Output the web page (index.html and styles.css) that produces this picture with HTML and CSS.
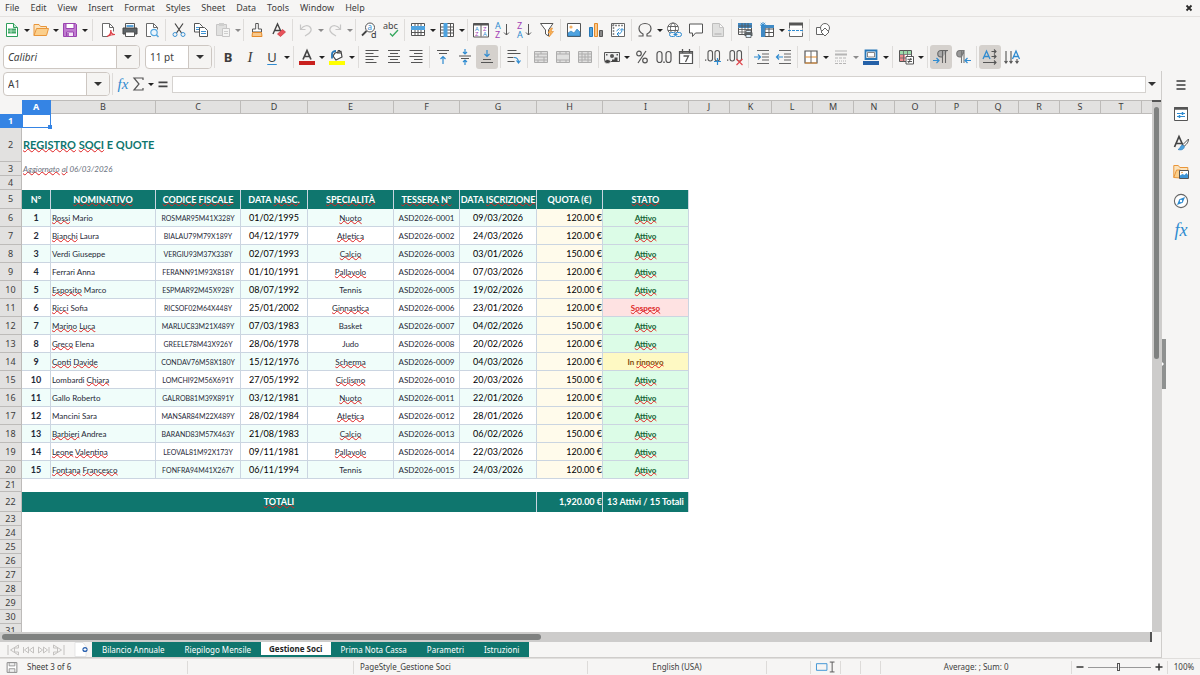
FILE: index.html
```html
<!DOCTYPE html>
<html lang="en">
<head>
<meta charset="utf-8">
<title>Gestione Soci</title>
<link rel="stylesheet" href="styles.css">
</head>
<body>
<header class="menubar">
  <nav class="menus">
    <button>File</button><button>Edit</button><button>View</button><button>Insert</button><button>Format</button><button>Styles</button><button>Sheet</button><button>Data</button><button>Tools</button><button>Window</button><button>Help</button>
  </nav>
  <button class="close" aria-label="Close document"><svg viewBox="0 0 8 8"><path d="M1.500 1.500l5 5M6.500 1.500l-5 5" stroke="#2b2b2b" stroke-width="1.800"/></svg></button>
</header>

<div class="toolbar standard">
  <button class="tool" aria-label="New"><svg viewBox="0 0 16 16"><path d="M2.500 1.500h7l4 4v9h-11z" fill="#fff" stroke="#2f9e5b"/><path d="M9.500 1.500v4h4" fill="#c9ecd5" stroke="#2f9e5b"/><path d="M4 6.500h8v5H4z" fill="#3fa866"/><path d="M4 9h8M7 6.500v5" stroke="#d8f2e0" stroke-width=".7"/></svg></button><button class="caret" aria-label="New options"></button>
  <button class="tool" aria-label="Open"><svg viewBox="0 0 16 16"><path d="M1 13.500V2.500h5l1.500 2h6v2" fill="#fbe3bd" stroke="#e9963a"/><path d="M1 13.500L3.500 6.500h12L13.500 13.500z" fill="#fbcf8c" stroke="#e9963a"/></svg></button><button class="caret" aria-label="Open options"></button>
  <button class="tool" aria-label="Save"><svg viewBox="0 0 16 16"><path d="M1.500 1.500h12l1 1v12h-13z" fill="#c07bd0" stroke="#9a44b0"/><path d="M4 1.500h8v5H4z" fill="#fff" stroke="#9a44b0"/><path d="M4.500 10h7v4.500h-7z" fill="#f5e6f8" stroke="#9a44b0"/><path d="M6 11v3" stroke="#9a44b0" stroke-width="1.500"/></svg></button><button class="caret" aria-label="Save options"></button>
  <i class="sep wide"></i>
  <button class="tool" aria-label="Export as PDF"><svg viewBox="0 0 16 16"><path d="M8 14.500H2.500v-13h7l4 4v4" fill="#fff" stroke="#6a6a6a"/><path d="M9.500 1.500v4h4" fill="none" stroke="#6a6a6a"/><path d="M7 14.500c3-1 4-4 3.800-6.500 0 2.500 1.500 4.500 4.200 4.500-3 0-5 .5-8 2z" fill="none" stroke="#dc4048" stroke-width="1.200"/></svg></button>
  <button class="tool" aria-label="Print"><svg viewBox="0 0 16 16"><path d="M1 6h14v6H1z" fill="#5d6468" stroke="#444"/><path d="M3.500 1.500h9V6h-9z" fill="#fff" stroke="#555"/><path d="M3.500 10h9v4.500h-9z" fill="#fff" stroke="#555"/><path d="M4.500 4h7" stroke="#2f8bd0" stroke-width="1.600"/></svg></button>
  <button class="tool" aria-label="Print preview"><svg viewBox="0 0 16 16"><path d="M7 14.500H2.500v-13h7l4 4v2" fill="#fff" stroke="#6a6a6a"/><path d="M9.500 1.500v4h4" fill="none" stroke="#6a6a6a"/><circle cx="10" cy="10.500" r="3.200" fill="#eaf5fd" stroke="#59a8df" stroke-width="1.200"/><path d="M12.300 12.800l2.200 2.200" stroke="#59a8df" stroke-width="1.600"/></svg></button>
  <i class="sep"></i>
  <button class="tool" aria-label="Cut"><svg viewBox="0 0 16 16"><path d="M4 1.500l6.500 9.500M12 1.500L5.500 11" stroke="#444" stroke-width="1.200"/><circle cx="4" cy="12.500" r="2" fill="none" stroke="#3d93d4"/><circle cx="12" cy="12.500" r="2" fill="none" stroke="#3d93d4"/></svg></button>
  <button class="tool" aria-label="Copy"><svg viewBox="0 0 16 16"><path d="M1.500 1.500h5l3 3V10h-8z" fill="#fff" stroke="#555"/><path d="M3 5.500h4M3 7.500h4" stroke="#3d93d4"/><path d="M6.500 5.500h5l3 3v6h-8z" fill="#fff" stroke="#555"/><path d="M8 9.500h5M8 11.500h5" stroke="#3d93d4"/></svg></button>
  <button class="tool dim" aria-label="Paste"><svg viewBox="0 0 16 16"><path d="M1.500 2.500h10v11h-10z" fill="#ccc" stroke="#999"/><path d="M4 1h5v3H4z" fill="#aaa"/><path d="M7.500 6.500h7v8h-7z" fill="#f5f5f5" stroke="#999"/><path d="M9 9.500h4M9 11.500h4" stroke="#aaa"/></svg></button><button class="caret dim" aria-label="Paste options"></button>
  <i class="sep"></i>
  <button class="tool" aria-label="Clone formatting"><svg viewBox="0 0 16 16"><path d="M6.700 1.500h2.600V7h3.200v3h-9V7h3.200z" fill="#fff" stroke="#555"/><path d="M3.500 10.500h9l.5 4h-10z" fill="#f9c98d" stroke="#e58b2a"/></svg></button>
  <button class="tool" aria-label="Clear formatting"><svg viewBox="0 0 16 16"><path d="M2 12L6.500 2 10 9.500M4 8.500h5" fill="none" stroke="#444" stroke-width="1.400"/><path d="M6.500 12l5-4.500 3 2.500-5 4.500z" fill="#e8525a" stroke="#c9303a" stroke-width=".7"/></svg></button>
  <i class="sep"></i>
  <button class="tool dim" aria-label="Undo"><svg viewBox="0 0 16 16"><path d="M2.500 2.500v5h5M3 7c3-4 7-4 9-2 2.500 2.700 1 6-5 9" fill="none" stroke="#999" stroke-width="1.200"/></svg></button><button class="caret dim" aria-label="Undo list"></button>
  <button class="tool dim" aria-label="Redo"><svg viewBox="0 0 16 16"><path d="M13.500 2.500v5h-5M13 7c-3-4-7-4-9-2-2.500 2.700-1 6 5 9" fill="none" stroke="#999" stroke-width="1.200"/></svg></button><button class="caret dim" aria-label="Redo list"></button>
  <i class="sep"></i>
  <button class="tool" aria-label="Find and replace"><svg viewBox="0 0 16 16"><circle cx="9" cy="5.500" r="4.500" fill="#fff" stroke="#555"/><path d="M5.500 9L1 13.500" stroke="#444" stroke-width="1.800"/><text x="6.500" y="8" font-size="8" fill="#2f8bd0">a</text><text x="10" y="16" font-size="9" fill="#333">d</text></svg></button>
  <button class="tool" aria-label="Spelling"><svg viewBox="0 0 16 16"><text x="0" y="7" font-size="9" fill="#444">abc</text><path d="M7 11.500l2.500 2.500L15 8" fill="none" stroke="#36a85f" stroke-width="1.300"/></svg></button>
  <i class="sep"></i>
  <button class="tool" aria-label="Row"><svg viewBox="0 0 16 16"><path d="M1.500 1.500h13v12h-13z" fill="#fff" stroke="#555"/><path d="M5 1.500v12M8 1.500v12M11 1.500v12M1.500 10.500h13" stroke="#555"/><path d="M1 4h14v4H1z" fill="#4ea3e0"/></svg></button><button class="caret" aria-label="Row options"></button>
  <button class="tool" aria-label="Column"><svg viewBox="0 0 16 16"><path d="M1.500 1.500h13v13h-13z" fill="#fff" stroke="#555"/><path d="M1.500 5h13M1.500 8h13M1.500 11h13M11.500 1.500v13" stroke="#555"/><path d="M4.500 1h4v14h-4z" fill="#4ea3e0"/></svg></button><button class="caret" aria-label="Column options"></button>
  <i class="sep"></i>
  <button class="tool" aria-label="Sort"><svg viewBox="0 0 16 16"><path d="M.5 1.500h15v13.500H.5z" fill="#fff" stroke="#555"/><path d="M.5 2.500h15" stroke="#555" stroke-width="2"/><path d="M8 2v12.500" stroke="#555"/><text x="2" y="8.500" font-size="6" fill="#2f8bd0">A</text><text x="2" y="14" font-size="6" fill="#a23fb5">Z</text><text x="10" y="8.500" font-size="6" fill="#a23fb5">Z</text><text x="10" y="14" font-size="6" fill="#2f8bd0">A</text></svg></button>
  <button class="tool" aria-label="Sort ascending"><svg viewBox="0 0 16 16"><text x="0" y="7" font-size="9" fill="#2f8bd0">A</text><text x="0" y="16" font-size="9" fill="#a23fb5">Z</text><path d="M11.500 2v11M9 10.500l2.500 2.500 2.500-2.500" fill="none" stroke="#555"/></svg></button>
  <button class="tool" aria-label="Sort descending"><svg viewBox="0 0 16 16"><text x="0" y="7" font-size="9" fill="#a23fb5">Z</text><text x="0" y="16" font-size="9" fill="#2f8bd0">A</text><path d="M11.500 2v11M9 10.500l2.500 2.500 2.500-2.500" fill="none" stroke="#555"/></svg></button>
  <button class="tool" aria-label="AutoFilter"><svg viewBox="0 0 16 16"><path d="M1.500 1.500h12.500L9.500 8v6l-3-2V8z" fill="#fff" stroke="#555"/><path d="M12 6l-3 5h2.500L10 15l4.500-5.500H12L13.500 6z" fill="#f9b35b" stroke="#e58b2a" stroke-width=".6"/></svg></button>
  <i class="sep"></i>
  <button class="tool" aria-label="Insert image"><svg viewBox="0 0 16 16"><path d="M1.500 1.500h13v13h-13z" fill="#fff" stroke="#555"/><circle cx="5" cy="5" r="1.600" fill="#f6b165"/><path d="M2 14v-3l3-2 3 2 3-4 3 3v4z" fill="#4ea3e0" stroke="#2878b8" stroke-width=".6"/></svg></button>
  <button class="tool" aria-label="Insert chart"><svg viewBox="0 0 16 16"><path d="M1.500 5.500h3v9h-3z" fill="#4ea3e0" stroke="#2878b8"/><path d="M6.500 1.500h3v13h-3z" fill="#fbc88a" stroke="#e58b2a"/><path d="M11.500 8.500h3v6h-3z" fill="#888" stroke="#555"/></svg></button>
  <button class="tool" aria-label="Insert pivot table"><svg viewBox="0 0 16 16"><path d="M1.500 1.500h13v13h-13z" fill="#fff" stroke="#666"/><path d="M2 3.500h12M3.500 2v12" stroke="#888" stroke-width="1.500" stroke-dasharray="2 1"/><path d="M7 12c4 0 5-2 5-5M10 8.500L12 6.500l2 2M9 10L7 12l2 2M6.500 9l3-2.500" fill="none" stroke="#2f8bd0"/></svg></button>
  <i class="sep"></i>
  <button class="tool" aria-label="Special character"><svg viewBox="0 0 16 16"><path d="M1.500 14h4.500v-2C3 10.500 2 8.500 2 6.500 2 3.500 4.500 1.500 8 1.500s6 2 6 5c0 2-1 4-4 5.500v2h4.500" fill="none" stroke="#555" stroke-width="1.200"/></svg></button><button class="caret" aria-label="Special character list"></button>
  <button class="tool" aria-label="Hyperlink"><svg viewBox="0 0 16 16"><circle cx="7" cy="6.500" r="5.500" fill="#fff" stroke="#666"/><ellipse cx="7" cy="6.500" rx="2.500" ry="5.500" fill="none" stroke="#666"/><path d="M2 4.500h10M2 8.500h10" stroke="#666"/><rect x="3.500" y="10.500" width="6" height="4" rx="2" fill="#f6f5f4" stroke="#2f8bd0"/><rect x="9.500" y="10.500" width="6" height="4" rx="2" fill="#f6f5f4" stroke="#2f8bd0"/><path d="M7.500 12.500h4" stroke="#2f8bd0"/></svg></button>
  <button class="tool" aria-label="Insert comment"><svg viewBox="0 0 16 16"><path d="M1.500 2h13v9H7.500l-3 3.500V11h-3z" fill="#fff" stroke="#555"/></svg></button>
  <button class="tool dim" aria-label="Headers and footers"><svg viewBox="0 0 16 16"><path d="M2.500 1.500h7l4 4v9h-11z" fill="#ccc" stroke="#888"/><path d="M9.500 1.500v4h4z" fill="#fff" stroke="#999"/><path d="M4.500 11h7v2h-7z" fill="#999"/></svg></button>
  <i class="sep"></i>
  <button class="tool" aria-label="Define print area"><svg viewBox="0 0 16 16"><path d="M1.500 1.500h13v11h-13z" fill="#fff" stroke="#555"/><path d="M1 1h14v5H1z" fill="#4089c4"/><path d="M5 1v11M8 1v11M11 1v11M1 4h14M1 7.500h14M1 10h14" stroke="#555" stroke-width=".8"/><path d="M7.500 10.500h8v3.500h-8z" fill="#5d6468"/><path d="M9 8.500h5v2H9zM9 12.500h5v3H9z" fill="#dceffc" stroke="#444" stroke-width=".7"/></svg></button>
  <button class="tool" aria-label="Freeze rows and columns"><svg viewBox="0 0 16 16"><path d="M2.500 3.500h12v11h-12z" fill="#fff" stroke="#555"/><path d="M6 3v11M10 3v11M2 7h12M2 10.500h12" stroke="#555"/><path d="M2 3h13v3H2zM2 3h4v12H2z" fill="#4089c4"/><path d="M4 0v6M1 3h6M1.800 .8l4.400 4.400M6.200 .8L1.800 5.200" stroke="#2f8bd0" stroke-width=".9"/></svg></button><button class="caret" aria-label="Freeze options"></button>
  <button class="tool" aria-label="Split window"><svg viewBox="0 0 16 16"><path d="M1.500 1.500h13v13h-13z" fill="#fff" stroke="#666"/><path d="M1 2h14" stroke="#555" stroke-width="3"/><path d="M1 7h14M1 10h14" stroke="#f6f5f4"/><path d="M0 8.500h16" stroke="#2f8bd0" stroke-width="1.200" stroke-dasharray="3 1"/></svg></button>
  <i class="sep"></i>
  <button class="tool" aria-label="Show draw functions"><svg viewBox="0 0 16 16"><path d="M1.500 5.500h7v7h-7z" fill="#fff" stroke="#666"/><circle cx="10" cy="6" r="4.500" fill="#fff" stroke="#666"/><path d="M10 6l4 4-4 4-4-4z" fill="#fff" stroke="#666"/></svg></button>
</div>

<div class="toolbar formatting">
  <label class="combo font-combo"><input value="Calibri" aria-label="Font name"><span class="drop"></span></label>
  <label class="combo size-combo"><input value="11 pt" aria-label="Font size"><span class="drop"></span></label>
  <i class="sep"></i>
  <button class="tool glyph bold">B</button>
  <button class="tool glyph ital">I</button>
  <button class="tool glyph under">U</button><button class="caret" aria-label="Underline styles"></button>
  <i class="sep"></i>
  <button class="tool" aria-label="Font color"><svg viewBox="0 0 16 16"><path d="M4 10.500L8 1.500l4 9M5.500 7.500h5" fill="none" stroke="#444" stroke-width="1.700"/><path d="M0 12h16v4H0z" fill="#c9211e"/></svg></button><button class="caret" aria-label="Font colors"></button>
  <button class="tool" aria-label="Highlighting color"><svg viewBox="0 0 16 16"><path d="M6 4l6-1.500 1 5.500-6 3-3-4z" fill="#fff" stroke="#444" stroke-width="1.200"/><path d="M9 5V1.500h2V5" fill="none" stroke="#444"/><path d="M3 9.500V5c0-2 2-3 4-3" fill="none" stroke="#2878b8" stroke-width="1.800"/><path d="M0 12h16v4H0z" fill="#ffff00"/></svg></button><button class="caret" aria-label="Highlighting colors"></button>
  <i class="sep"></i>
  <button class="tool" aria-label="Align left"><svg viewBox="0 0 16 16"><path d="M1.500 1.500h13M1.500 4.500h8M1.500 7.500h13M1.500 10.500h8M1.500 13.500h11" stroke="#555" stroke-width="1.100"/></svg></button>
  <button class="tool" aria-label="Center"><svg viewBox="0 0 16 16"><path d="M2 1.500h12M4 4.500h8M2 7.500h12M4 10.500h8M2 13.500h12" stroke="#555" stroke-width="1.100"/></svg></button>
  <button class="tool" aria-label="Align right"><svg viewBox="0 0 16 16"><path d="M1.500 1.500h13M6 4.500h8.500M1.500 7.500h13M6 10.500h8.500M3 13.500h11.500" stroke="#555" stroke-width="1.100"/></svg></button>
  <i class="sep"></i>
  <button class="tool" aria-label="Align top"><svg viewBox="0 0 16 16"><path d="M2 1.500h12M4 4.500h8" stroke="#555" stroke-width="1.200"/><path d="M8 15V7.500M5.500 10L8 7.500l2.500 2.500" fill="none" stroke="#2f8bd0" stroke-width="1.200"/></svg></button>
  <button class="tool" aria-label="Center vertically"><svg viewBox="0 0 16 16"><path d="M2 7h12M4 9.500h8" stroke="#555" stroke-width="1.200"/><path d="M8 0v5M6 3l2 2 2-2M8 16v-5M6 13l2-2 2 2" fill="none" stroke="#2f8bd0" stroke-width="1.200"/></svg></button>
  <button class="tool active" aria-label="Align bottom"><svg viewBox="0 0 16 16"><path d="M4 10.500h8M2 13.500h12" stroke="#555" stroke-width="1.200"/><path d="M8 1v6.500M5.500 5L8 7.500 10.500 5" fill="none" stroke="#2f8bd0" stroke-width="1.200"/></svg></button>
  <i class="sep"></i>
  <button class="tool" aria-label="Wrap text"><svg viewBox="0 0 16 16"><path d="M1.500 1.500h9M1.500 4.500h13M1.500 8.500h6M1.500 12.500h7" stroke="#555" stroke-width="1.200"/><path d="M8 8.500c3 0 4.500 1 4.500 5M10.500 11.500l2 2.500 2-2.500" fill="none" stroke="#2f8bd0" stroke-width="1.200"/></svg></button>
  <i class="sep"></i>
  <button class="tool dim" aria-label="Merge and center cells"><svg viewBox="0 0 16 16"><path d="M1.500 2.500h13v11h-13z" fill="#ccc" stroke="#666"/><path d="M1.500 5h13M1.500 8h13M1.500 11h13M8 2.500V5M5 11v2.500M11 11v2.500M5 5v3M11 8v3" stroke="#666"/></svg></button>
  <button class="tool dim" aria-label="Merge cells"><svg viewBox="0 0 16 16"><path d="M1.500 2.500h13v11h-13z" fill="#ccc" stroke="#666"/><path d="M1.500 5h13M1.500 11h13M5 2.500V5M11 2.500V5M5 11v2.500M11 11v2.500" stroke="#666"/></svg></button>
  <button class="tool dim" aria-label="Split cells"><svg viewBox="0 0 16 16"><path d="M1.500 2.500h13v11h-13z" fill="#ccc" stroke="#666"/><path d="M1.500 5h13M1.500 8h13M1.500 11h13M5 2.500v11M8 5v6M11 2.500v11" stroke="#666"/></svg></button>
  <i class="sep"></i>
  <button class="tool" aria-label="Format as currency"><svg viewBox="0 0 16 16"><path d="M.5 3.500h15v9H.5z" fill="#eee" stroke="#555"/><circle cx="8" cy="7" r="2" fill="#555"/><path d="M2 5h1.500v1.500H2zM12.500 5H14v1.500h-1.500z" fill="#555"/><path d="M8 10.500h2.500V8.500h3V13H8z" fill="#444"/><ellipse cx="3.500" cy="12.500" rx="3" ry="2" fill="#444" stroke="#f6f5f4" stroke-width=".6"/></svg></button><button class="caret" aria-label="Currency list"></button>
  <button class="tool" aria-label="Format as percent"><svg viewBox="0 0 16 16"><circle cx="5" cy="4.500" r="2.300" fill="none" stroke="#555" stroke-width="1.200"/><circle cx="11" cy="11.500" r="2.300" fill="none" stroke="#555" stroke-width="1.200"/><path d="M12 2L4 14" stroke="#555" stroke-width="1.200"/></svg></button>
  <button class="tool" aria-label="Format as number"><svg viewBox="0 0 16 16"><rect x="1" y="2.500" width="5" height="11" rx="2.500" fill="none" stroke="#555" stroke-width="1.200"/><rect x="10" y="2.500" width="5" height="11" rx="2.500" fill="none" stroke="#555" stroke-width="1.200"/><path d="M7.300 12.500h1.400v1.400H7.300z" fill="#555"/></svg></button>
  <button class="tool" aria-label="Format as date"><svg viewBox="0 0 16 16"><path d="M1.500 2.500h13v12h-13z" fill="#fff" stroke="#555" stroke-width="1.200"/><path d="M1.500 4h13" stroke="#555" stroke-width="1.500"/><path d="M4.500 0v4M11.500 0v4" stroke="#555" stroke-width="1.300"/><path d="M5.500 7h5l-3 6" fill="none" stroke="#555" stroke-width="1.300"/></svg></button>
  <i class="sep"></i>
  <button class="tool" aria-label="Add decimal place"><svg viewBox="0 0 16 16"><path d="M0 10.500h1.300v1.300H0z" fill="#555"/><rect x="3" y="1.500" width="4.500" height="10.500" rx="2.200" fill="none" stroke="#555" stroke-width="1.100"/><rect x="10" y="1.500" width="4.500" height="10.500" rx="2.200" fill="none" stroke="#555" stroke-width="1.100"/><path d="M12.500 9v7M9 12.500h7" stroke="#2f8bd0" stroke-width="1.200"/></svg></button>
  <button class="tool" aria-label="Delete decimal place"><svg viewBox="0 0 16 16"><path d="M0 10.500h1.300v1.300H0z" fill="#555"/><rect x="3" y="1.500" width="4.500" height="10.500" rx="2.200" fill="none" stroke="#555" stroke-width="1.100"/><rect x="10" y="1.500" width="4.500" height="10.500" rx="2.200" fill="none" stroke="#555" stroke-width="1.100"/><path d="M9.500 10l6 6M15.500 10l-6 6" stroke="#e0484f" stroke-width="1.200"/></svg></button>
  <i class="sep"></i>
  <button class="tool" aria-label="Increase indent"><svg viewBox="0 0 16 16"><path d="M3 1.500h12M8 5h7M8 8h7M8 11h7M3 14.500h12" stroke="#666" stroke-width="1.100"/><path d="M0 8h6.500M4 5.500L6.500 8 4 10.500" fill="none" stroke="#2f8bd0" stroke-width="1.200"/></svg></button>
  <button class="tool" aria-label="Decrease indent"><svg viewBox="0 0 16 16"><path d="M3 1.500h12M8 5h7M8 8h7M8 11h7M3 14.500h12" stroke="#666" stroke-width="1.100"/><path d="M7 8H.8M3 5.500L.5 8 3 10.500" fill="none" stroke="#2f8bd0" stroke-width="1.200"/></svg></button>
  <i class="sep"></i>
  <button class="tool" aria-label="Borders"><svg viewBox="0 0 16 16"><path d="M2 2h12v12H2z" fill="#fff" stroke="#555" stroke-width="1.200"/><path d="M2 8h12M2 14h12" stroke="#e58b2a"/><path d="M8 2v12" stroke="#666"/></svg></button><button class="caret" aria-label="Border list"></button>
  <button class="tool dim" aria-label="Border style"><svg viewBox="0 0 16 16"><path d="M2 2h12" stroke="#777"/><path d="M2 5.500h12" stroke="#777" stroke-width="2"/><path d="M2 9h12M2 14.500h12" stroke="#777" stroke-dasharray="3 1"/><path d="M2 12h12" stroke="#777" stroke-dasharray="1 1"/></svg></button><button class="caret dim" aria-label="Border styles"></button>
  <button class="tool" aria-label="Border color"><svg viewBox="0 0 16 16"><path d="M2.500 1.500h11v8.500h-11z" fill="#fff" stroke="#2878b8" stroke-width="1.800"/><path d="M4.500 3.500h7v4.500h-7z" fill="#fff" stroke="#555" stroke-width=".7"/><path d="M0 12h16v4H0z" fill="#2561a8"/></svg></button><button class="caret" aria-label="Border colors"></button>
  <i class="sep"></i>
  <button class="tool" aria-label="Conditional formatting"><svg viewBox="0 0 16 16"><path d="M1.500 1.500h12v11h-12z" fill="#fff" stroke="#555"/><path d="M2 2h11v3H2z" fill="#9bdca9"/><path d="M2 6h5v6H2z" fill="#ee8a8d"/><path d="M5.500 1.500v11M9.500 1.500v11M1.500 5.500h12M1.500 9h12" stroke="#666" stroke-width=".8"/><path d="M8 7.500h7.500V15H8z" fill="#fff" stroke="#555"/><path d="M9.500 10.300h4.500M9.500 12.500h4.500M13 9l-2.500 5" stroke="#444" stroke-width=".9"/></svg></button><button class="caret" aria-label="Conditional formats"></button>
  <i class="sep"></i>
  <button class="tool active" aria-label="Left to right"><svg viewBox="0 0 16 16"><path d="M15 1.500H8a3 3 0 0 0 0 6.500h1.500z" fill="#aaa"/><path d="M15 1.500H8a3 3 0 0 0 0 6.500h1.500M9.500 1.500V14M12.500 1.500V14" fill="none" stroke="#666" stroke-width="1.100"/><path d="M0 11.500h5.500M3.500 9l2.500 2.500L3.500 14" fill="none" stroke="#2f8bd0" stroke-width="1.200"/></svg></button>
  <button class="tool" aria-label="Right to left"><svg viewBox="0 0 16 16"><path d="M9 1.500H5a3 3 0 0 0 0 6.500h1.500zM6.500 1.500V14M9 1.500V14" fill="#999" stroke="#777" stroke-width="1.100"/><path d="M16 11.500h-5M12.500 9L10 11.500l2.500 2.500" fill="none" stroke="#2f8bd0" stroke-width="1.200"/></svg></button>
  <i class="sep"></i>
  <button class="tool active" aria-label="Text direction left to right"><svg viewBox="0 0 16 16"><path d="M1 10L4.500 2 8 10M2.300 7.500h4.500" fill="none" stroke="#2f8bd0" stroke-width="1.300"/><path d="M9.500 2.500H14M9.500 7.500H14M1 13.500h13M12 .5l2 2-2 2M12 5.500l2 2-2 2M12 11.500l2 2-2 2" fill="none" stroke="#555" stroke-width="1.100"/></svg></button>
  <button class="tool" aria-label="Text direction top to bottom"><svg viewBox="0 0 16 16"><path d="M8.500 10L12 2l3.500 8M9.800 7.500h4.500" fill="none" stroke="#2f8bd0" stroke-width="1.300"/><path d="M2 2v12M7 2v12M13 10v4M.5 12L2 14l1.500-2M5.500 12L7 14l1.500-2M11.500 12l1.500 2 1.500-2" fill="none" stroke="#555" stroke-width="1.100"/></svg></button>
</div>

<main class="workspace">
  <section class="document">
    <div class="formula-bar">
      <label class="combo name-combo"><input value="A1" aria-label="Name box"><span class="drop"></span></label>
      <i class="sep"></i>
      <button class="fx">fx</button>
      <button class="sigma" aria-label="Select function"><svg viewBox="0 0 16 16"><path d="M12 4V2H3l5 6-5 6h9v-2" fill="none" stroke="#555" stroke-width="1.200"/></svg></button><button class="caret" aria-label="Function list"></button>
      <button class="equals" aria-label="Formula"><svg viewBox="0 0 16 16"><path d="M3.500 6.300h9M3.500 10.300h9" stroke="#444" stroke-width="1.800"/></svg></button>
      <input class="formula" aria-label="Input line">
      <button class="expand" aria-label="Expand formula bar"></button>
    </div>
    <div class="grid-area">
      <div class="sheet"><table id="sheet"></table></div>
      <div class="vscroll"><div class="vthumb"></div></div>
    </div>
    <div class="hscroll"><div class="hthumb"></div></div>
    <div class="tabbar">
      <div class="tabnav">
        <button aria-label="First sheet"><svg viewBox="0 0 14 12"><path d="M1.500 1v10M12 1L4 6l8 5V8H8V4h4z"/></svg></button><button aria-label="Previous sheet"><svg viewBox="0 0 14 12"><path d="M2 3v6M7 3L3 6l4 3zM12 3L8 6l4 3z"/></svg></button><button aria-label="Next sheet"><svg viewBox="0 0 14 12"><path d="M2 3l4 3-4 3zM7 3l4 3-4 3zM12.500 3v6"/></svg></button><button aria-label="Last sheet"><svg viewBox="0 0 14 12"><path d="M12.500 1v10M2 1l8 5-8 5V8h4V4H2z"/></svg></button>
      </div>
      <button class="addtab" aria-label="Add sheet"><svg viewBox="0 0 14 14"><path d="M1 0h8l3 4v10H1z" fill="#fff" stroke="#ddd" stroke-width=".7"/><circle cx="11" cy="7" r="2.600" fill="#2b62b0"/><path d="M9.500 7h3M11 5.500v3" stroke="#fff"/></svg></button>
      <div class="tabs">
        <button>Bilancio Annuale</button><button>Riepilogo Mensile</button><button class="current">Gestione Soci</button><button>Prima Nota Cassa</button><button>Parametri</button><button>Istruzioni</button>
      </div>
    </div>
  </section>
  <aside class="sidebar">
    <button class="grab" aria-label="Hide sidebar"></button>
    <button aria-label="Sidebar settings"><svg viewBox="0 0 16 16"><path d="M3.500 4h9M3.500 8h9M3.500 12h9" stroke="#3a3a3a" stroke-width="1.500"/></svg></button>
    <button aria-label="Properties"><svg viewBox="0 0 16 16"><path d="M1.500 1.500h13v13h-13z" fill="#fff" stroke="#555"/><path d="M1 2.500h14" stroke="#555" stroke-width="2.500"/><path d="M4 7.500h8M4 10.500h8" stroke="#2f8bd0"/><path d="M9.500 6v3M6.500 9v3" stroke="#2f8bd0" stroke-width="1.500"/></svg></button>
    <button aria-label="Styles"><svg viewBox="0 0 16 16"><path d="M1.500 12L6 1.500l4 9M3.200 8.500h6" fill="none" stroke="#444" stroke-width="1.700"/><path d="M15.500 4L10 9.500l1.500 1.500C14 9 15.500 7 15.500 4z" fill="#fff" stroke="#555"/><path d="M5 14.500c2 0 2-4 4.500-4.500l2 1.500c-.5 3-3 4-6.500 3z" fill="#4ea3e0" stroke="#2878b8" stroke-width=".6"/></svg></button>
    <button aria-label="Gallery"><svg viewBox="0 0 16 16"><path d="M.8 13.500V1.500h4.500l1.500 2h8v3" fill="#fbe3bd" stroke="#e9963a"/><path d="M.8 13.500L3.500 6h4v8z" fill="#fbcf8c" stroke="#e9963a"/><path d="M6.500 6.500h9v8h-9z" fill="#fff" stroke="#555"/><path d="M7 14v-2.500l2.500-1.500 2 1 2-2L15 11v3z" fill="#3d93d4"/><circle cx="9" cy="8.500" r=".8" fill="#e9963a"/></svg></button>
    <button aria-label="Navigator"><svg viewBox="0 0 16 16"><circle cx="8" cy="8" r="6.600" fill="#fff" stroke="#666" stroke-width="1.100"/><path d="M12 4l-2.300 5.700L4 12l2.300-5.700z" fill="#2f8bd0"/><circle cx="8" cy="8" r="1.200" fill="#fff"/></svg></button>
    <button class="fx" aria-label="Functions">fx</button>
  </aside>
</main>

<footer class="status">
  <span class="s-save"><svg viewBox="0 0 16 16"><path d="M2 2h12v12H2z" fill="#fff" stroke="#888" stroke-width="1.200"/><path d="M4.500 2h7v4h-7zM4.500 9.500h7V14h-7z" fill="#eee" stroke="#888"/></svg></span>
  <span class="s-sheet">Sheet 3 of 6</span>
  <span class="s-info"></span>
  <span class="s-style">PageStyle_Gestione Soci</span>
  <span class="s-lang">English (USA)</span>
  <span class="s-insert"></span>
  <span class="s-mode"><svg viewBox="0 0 20 12"><path d="M.5 2.500h11v7H.5z" fill="none" stroke="#3d93d4"/><path d="M14.500 .8h5M17 .8v10.400M14.500 11.200h5" fill="none" stroke="#555"/></svg></span>
  <span class="s-gap"></span><span class="s-gap"></span>
  <span class="s-sum">Average: ; Sum: 0</span>
  <span class="s-zoom"><button aria-label="Zoom out"><svg viewBox="0 0 8 8"><path d="M.5 4h7" stroke="#333" stroke-width="1.500"/></svg></button><input type="range" min="0" max="100" value="49" aria-label="Zoom"><button aria-label="Zoom in"><svg viewBox="0 0 8 8"><path d="M.5 4h7M4 .5v7" stroke="#333" stroke-width="1.500"/></svg></button></span>
  <span class="s-pct">100%</span>
</footer>
<script src="script.js"></script>
</body>
</html>
```
FILE: styles.css
```css
* { box-sizing: border-box; }
body { margin: 0; height: 100vh; display: flex; flex-direction: column; overflow: hidden; background: #f6f5f4; color: #3d3d3d; font: 9px/12px "Noto Sans", sans-serif; }
button, input { font: inherit; color: inherit; border: 0; background: none; padding: 0; margin: 0; }
svg { display: block; width: 100%; height: 100%; overflow: visible; }
svg text { font-family: "Noto Sans", sans-serif; }

.menubar { display: flex; justify-content: space-between; align-items: center; height: 16px; padding: 0 7px 0 5px; }
.menus { display: flex; gap: 11px; }
.close { width: 8px; height: 8px; }

.toolbar { display: flex; align-items: center; padding-left: 1px; }
.standard { height: 27px; border-top: 1px solid #e4e2e0; }
.formatting { height: 28px; padding-left: 3px; }
.tool { flex: none; width: 22px; height: 24px; padding: 4px 3px; border-radius: 3px; }
.tool.active { background: #d5d1cd; }
.dim { opacity: .5; }
.caret { flex: none; width: 7px; height: 16px; display: flex; align-items: center; justify-content: center; }
.formatting .caret { width: 8px; }
.caret::before { content: ""; border: 3px solid transparent; border-top-color: #222; border-bottom: 0; }
.sep { flex: none; width: 1px; height: 22px; margin: 0 2px; background: #dedcda; }
.sep.wide { margin: 0 4px; }
.tool.glyph { padding: 0; font-size: 13px; line-height: 22px; }
.bold { font-weight: 700; }
.tool.ital { font-family: "Liberation Serif", serif; font-style: italic; font-size: 15px; }
.under { text-decoration: underline #2f8bd0; text-underline-offset: 2px; }

.combo { flex: none; display: flex; height: 24px; border: 1px solid #cdc7c2; border-radius: 4px; background: #fff; overflow: hidden; }
.combo input { flex: 1; min-width: 0; padding: 0 4px; outline: 0; font-size: 10px; }
.drop { width: 23px; display: flex; align-items: center; justify-content: center; background: #f5f4f2; border-left: 1px solid #cdc7c2; }
.drop::before, .expand::before { content: ""; border: 4px solid transparent; border-top-color: #333; border-bottom: 0; }
.font-combo { width: 137px; margin-right: 5px; }
.font-combo input { font-style: italic; }
.size-combo { width: 67px; }
.name-combo { width: 107px; }

.workspace { flex: 1; min-height: 0; display: flex; }
.document { flex: 1; min-width: 0; display: flex; flex-direction: column; border-right: 1px solid #cfcdcb; }
.formula-bar { display: flex; align-items: center; height: 29px; padding: 0 3px 3px; }
.fx { font: italic 15px/20px "Liberation Serif", serif; color: #2f8bd0; }
.formula-bar .fx { width: 16px; }
.sigma, .equals { width: 16px; height: 16px; }
.equals { margin: 0 1px; }
.formula { flex: 1; min-width: 0; height: 17px; background: #fff; border: 1px solid #d5d2cf; }
.expand { width: 12px; display: flex; justify-content: center; }

.grid-area { flex: 1; min-height: 0; display: flex; }
.sheet { flex: 1; min-width: 0; overflow: hidden; background: #fff; }
.sheet table { table-layout: fixed; border-collapse: separate; border-spacing: 0; width: 0; }
.sheet th, .sheet td { padding: 0; white-space: nowrap; line-height: 12px; font-weight: 400; }
.sheet thead th { height: 14px; background: #e2e1e0; border: solid #bdbbb9; border-width: 1px 1px 1px 0; font-size: 9px; }
.sheet tbody th { background: #e2e1e0; border: solid #bdbbb9; border-width: 0 1px 1px 0; font-size: 9px; }
.sheet thead th.corner { background: #f6f5f4; border-color: #f6f5f4; }
.sheet thead th.on, .sheet tbody th.on { background: #3584e4; border-color: #3584e4; color: #fff; font-weight: 700; }
.sheet td { font-family: Lato, sans-serif; text-align: center; color: #1f2937; }
.h14 { height: 14px; } .h13 { height: 13px; } .h18 { height: 18px; } .h19 { height: 19px; } .h20 { height: 20px; } .h34 { height: 34px; }
.sheet td.cursor { position: relative; border: 1px solid #3584e4; }
.cursor::after { content: ""; position: absolute; right: -2px; bottom: -2px; width: 4px; height: 4px; background: #3584e4; }
.sheet td.title { text-align: left; padding-left: 1px; font-size: 11px; font-weight: 700; color: #0f766e; }
.sheet td.updated { text-align: left; padding-left: 1px; font-size: 8px; font-style: italic; color: #6b7280; }
.sheet td.head { background: #0f766e; color: #fff; font-size: 9px; font-weight: 700; border-right: 1px solid #cbd5e1; }
.sheet td.cell { font-size: 8px; border: solid #cbd5e1; border-width: 0 1px 1px 0; }
.odd td.cell { background: #f0fdfa; }
.sheet td.num { font-size: 9px; font-weight: 700; }
.sheet td.name { text-align: left; padding-left: 1px; }
.sheet td.code { font-size: 7px; }
.sheet td.date { font-size: 9px; color: #000; }
.sheet td.fee { font-size: 9px; text-align: right; color: #000; background: #fffbeb; }
.sheet td.st { font-weight: 700; background: #dcfce7; color: #166534; }
.sheet td.off { background: #fee2e2; color: #dc2626; }
.sheet td.renew { background: #fef9c3; color: #854d0e; }
.sheet td.right { text-align: right; }
.sp { text-decoration: underline wavy #e02020 1px; text-underline-offset: -1px; text-decoration-skip-ink: none; }

.vscroll { width: 9px; background: #cdcccb; padding: 5px 2px 0; border-top: 2px solid #555; }
.vthumb { height: 48%; border-radius: 3px; background: #7f8180; }
.hscroll { height: 10px; margin-right: 9px; background: #cdcccb; padding: 2px; border-right: 2px solid #555; }
.hthumb { width: 47%; height: 6px; border-radius: 3px; background: #7f8180; }
.tabbar { display: flex; height: 16px; border-bottom: 1px solid #cfcdcb; font-size: 8px; }
.tabnav { display: flex; align-items: center; width: 74px; padding-left: 6px; }
.tabnav button { width: 15px; height: 12px; }
.tabnav svg { fill: none; stroke: #c4c2c0; stroke-width: 1; }
.addtab { width: 18px; height: 15px; padding-right: 4px; }
.tabs { display: flex; }
.tabs button { padding: 0 10px; background: #0f766e; color: #fff; }
.tabs .current { padding: 0 8px; background: #fff; color: #222; font-weight: 700; border-bottom: 2px solid #0f766e; }

.sidebar { position: relative; flex: none; width: 38px; display: flex; flex-direction: column; align-items: center; gap: 13px; padding-top: 6px; }
.sidebar button { width: 16px; height: 16px; }
.sidebar button.fx { font-size: 18px; line-height: 16px; }
.sidebar .grab { position: absolute; left: 0; top: calc(50% - 26px); width: 4px; height: 50px; background: #8f9190; display: flex; align-items: center; }
.grab::before { content: ""; border: 2px solid transparent; border-left-color: #fff; border-right: 0; }

.status { display: flex; align-items: center; height: 17px; border-top: 1px solid #e0dedc; font-size: 8px; }
.status > span { display: flex; align-items: center; justify-content: center; height: 13px; border-right: 1px solid #dddbd9; }
.status .s-save { width: 24px; padding: 0 5px; border: 0; }
.status .s-sheet { width: 164px; justify-content: flex-start; padding-left: 3px; }
.status .s-info { flex: 167; }
.status .s-style { flex: 230; justify-content: flex-start; padding-left: 6px; }
.status .s-lang { flex: 180; }
.status .s-insert { flex: 44; }
.status .s-mode { width: 30px; }
.s-mode svg { width: 19px; height: 12px; }
.status .s-gap { width: 20px; }
.status .s-sum { flex: 192; }
.status .s-zoom { width: 96px; padding: 0 4px; gap: 4px; }
.s-zoom button { flex: none; width: 8px; height: 8px; }
.s-zoom input { appearance: none; flex: 1; min-width: 0; height: 8px; background: linear-gradient(#999, #999) center / 100% 1px no-repeat; }
.s-zoom input::-webkit-slider-thumb { appearance: none; width: 3px; height: 8px; background: #f6f5f4; border: 1px solid #555; }
.status .s-pct { width: 32px; border: 0; }
```
FILE: script.js
```js
// Words wrapped in ~tildes~ are underlined by the spelling checker.
const spell = s => s.replace(/~([^~]+)~/g, '<span class="sp">$1</span>');

const table = document.getElementById('sheet');
const view = table.parentElement;
const sum = list => list.reduce((a, b) => a + b, 0);

const widths = [22, 29, 105, 85, 67, 86, 66, 77, 66, 86, 41, 42, 41, 41, 41, 41, 42, 41, 41, 41, 41];
while (sum(widths) < view.clientWidth) widths.push(41);

// Column names: A to Z, then AA, AB and so on.
const letter = i => (i < 26 ? '' : letter(Math.floor(i / 26) - 1)) + String.fromCharCode(65 + i % 26);

const members = [
  ['~Rossi~ Mario', 'ROSMAR95M41X328Y', '01/02/1995', '~Nuoto~', '09/03/2026', 120, '~Attivo~'],
  ['~Bianchi~ Laura', 'BIALAU79M79X189Y', '04/12/1979', '~Atletica~', '24/03/2026', 120, '~Attivo~'],
  ['Verdi Giuseppe', 'VERGIU93M37X338Y', '02/07/1993', '~Calcio~', '03/01/2026', 150, '~Attivo~'],
  ['Ferrari Anna', 'FERANN91M93X818Y', '01/10/1991', '~Pallavolo~', '07/03/2026', 120, '~Attivo~'],
  ['~Esposito~ Marco', 'ESPMAR92M45X928Y', '08/07/1992', 'Tennis', '19/02/2026', 120, '~Attivo~'],
  ['~Ricci~ Sofia', 'RICSOF02M64X448Y', '25/01/2002', '~Ginnastica~', '23/01/2026', 120, '~Sospeso~'],
  ['~Marino~ ~Luca~', 'MARLUC83M21X489Y', '07/03/1983', 'Basket', '04/02/2026', 150, '~Attivo~'],
  ['~Greco~ Elena', 'GREELE78M43X926Y', '28/06/1978', 'Judo', '20/02/2026', 120, '~Attivo~'],
  ['~Conti~ ~Davide~', 'CONDAV76M58X180Y', '15/12/1976', '~Scherma~', '04/03/2026', 120, 'In ~rinnovo~'],
  ['Lombardi ~Chiara~', 'LOMCHI92M56X691Y', '27/05/1992', '~Ciclismo~', '20/03/2026', 150, '~Attivo~'],
  ['Gallo Roberto', 'GALROB81M39X891Y', '03/12/1981', '~Nuoto~', '22/01/2026', 120, '~Attivo~'],
  ['Mancini Sara', 'MANSAR84M22X489Y', '28/02/1984', '~Atletica~', '28/01/2026', 120, '~Attivo~'],
  ['~Barbieri~ Andrea', 'BARAND83M57X463Y', '21/08/1983', '~Calcio~', '06/02/2026', 150, '~Attivo~'],
  ['~Leone~ ~Valentina~', 'LEOVAL81M92X173Y', '09/11/1981', '~Pallavolo~', '22/03/2026', 120, '~Attivo~'],
  ['~Fontana~ ~Francesco~', 'FONFRA94M41X267Y', '06/11/1994', 'Tennis', '24/03/2026', 120, '~Attivo~'],
];
const headings = ['N°', '~NOMINATIVO~', '~CODICE~ ~FISCALE~', 'DATA ~NASC.~', '~SPECIALITÀ~', '~TESSERA~ ~N°~', 'DATA ~ISCRIZIONE~', 'QUOTA (€)', '~STATO~'];
const statusClass = { '~Attivo~': '', '~Sospeso~': ' off', 'In ~rinnovo~': ' renew' };

const td = (cls, text, span = 1) => `<td class="${cls}" colspan="${span}">${spell(text)}</td>`;
const row = (n, h, cells = '', cls = '') => `<tr class="${cls}"><th class="h${h}${n === 1 ? ' on' : ''}">${n}</th>${cells}</tr>`;

let rows = row(1, 14, td('cursor', '')) +
  row(2, 34, td('title', '~REGISTRO~ ~SOCI~ E QUOTE', 3)) +
  row(3, 14, td('updated', '~Aggiornato~ ~al~ 06/03/2026', 3)) +
  row(4, 14) +
  row(5, 19, headings.map(h => td('head', h)).join(''));

members.forEach(([name, code, born, sport, joined, fee, state], i) => {
  const card = 'ASD2026-' + String(i + 1).padStart(4, '0');
  rows += row(i + 6, 18,
    td('cell num', String(i + 1)) + td('cell name', name) + td('cell code', code) + td('cell date', born) +
    td('cell', sport) + td('cell', card) + td('cell date', joined) + td('cell fee', fee + '.00 €') +
    td('cell st' + statusClass[state], state), i % 2 ? '' : 'odd');
});

rows += row(21, 13) +
  row(22, 20, td('head', '~TOTALI~', 7) + td('head right', '1,920.00 €') + td('head', '13 Attivi / 15 Totali'));

// Empty rows continue down to the bottom edge of the view.
const usedHeight = 412;
const emptyRows = Math.ceil((view.clientHeight - usedHeight) / 14);
for (let i = 0; i < emptyRows; i++) rows += row(23 + i, 14);

table.innerHTML =
  `<colgroup>${widths.map(w => `<col style="width:${w}px">`).join('')}</colgroup>` +
  `<thead><tr><th class="corner"></th>${widths.slice(1).map((w, i) => `<th class="${i ? '' : 'on'}">${letter(i)}</th>`).join('')}</tr></thead>` +
  `<tbody>${rows}</tbody>`;
```
